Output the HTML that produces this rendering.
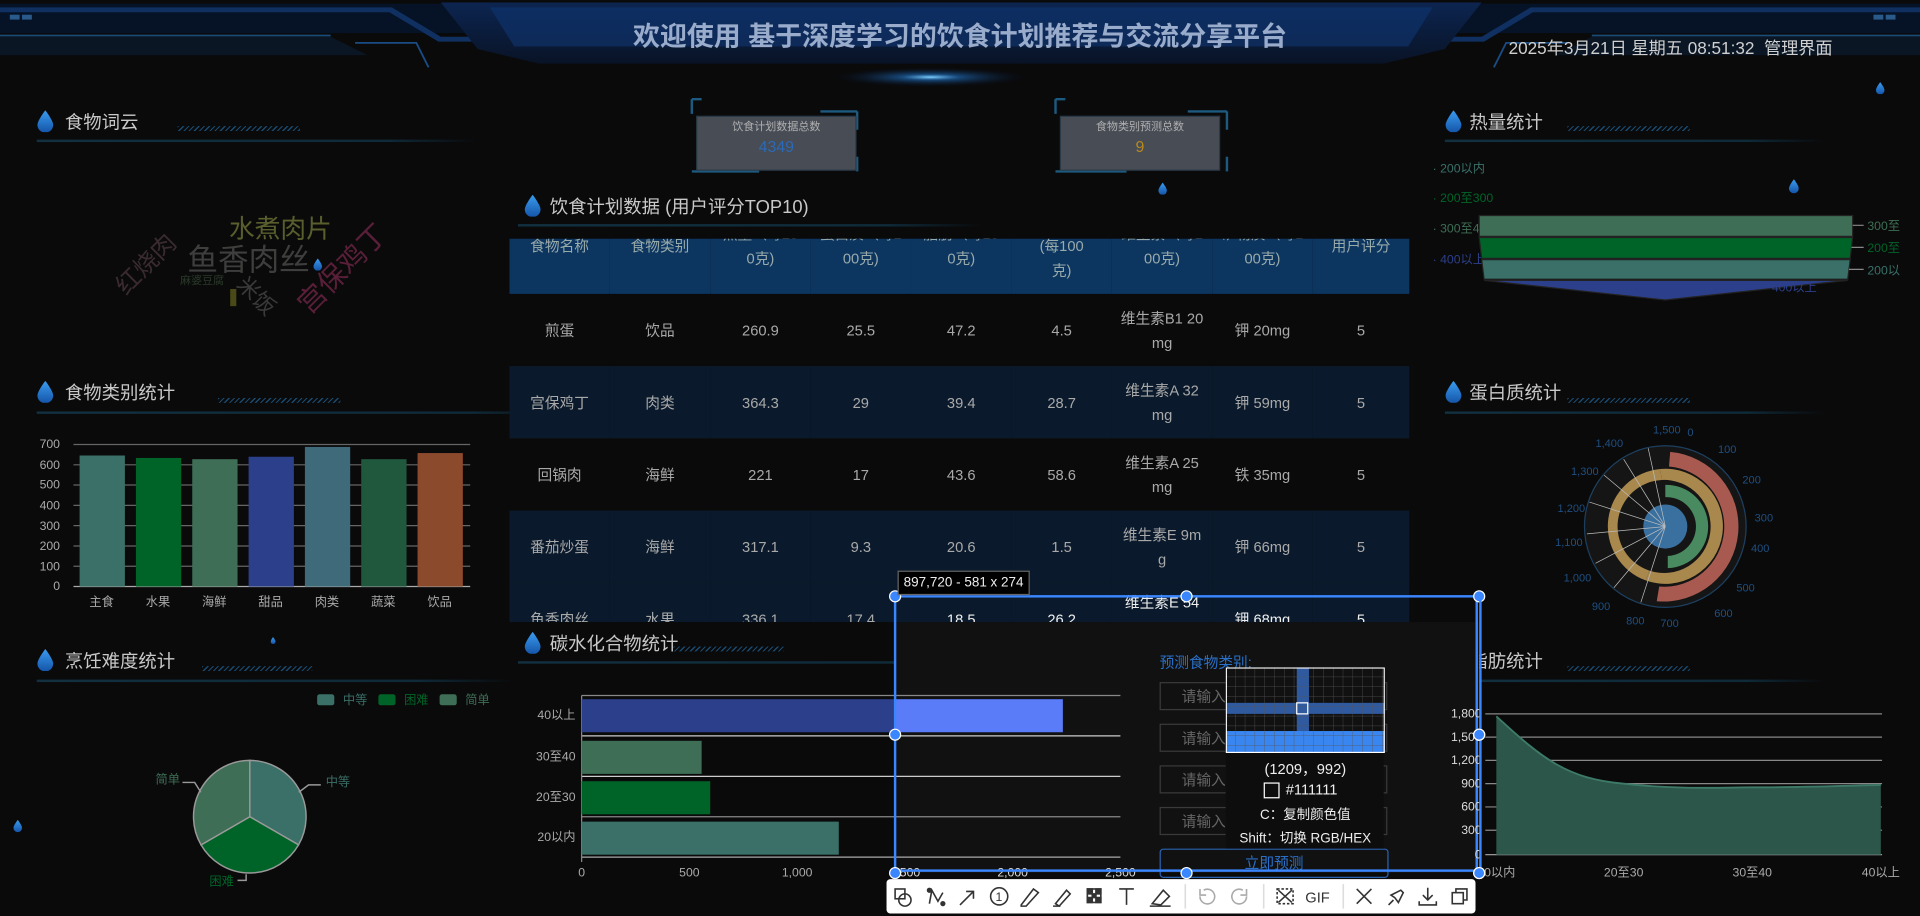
<!DOCTYPE html>
<html><head><meta charset="utf-8">
<style>
html,body{margin:0;padding:0;background:#0a0a0b;overflow:hidden;width:1920px;height:916px}
#s{position:absolute;left:0;top:0;width:1568px;height:748px;transform:scale(1.22449);transform-origin:0 0;font-family:"Liberation Sans","Noto Sans CJK SC",sans-serif;color:#bbb}
.a{position:absolute;white-space:nowrap}
.tt{position:absolute;font-size:15px;color:#c9c9c9}
.ul{position:absolute;height:2px;background:linear-gradient(90deg,#123040,#0f2a38 80%,transparent)}
.hat{position:absolute;height:4px;background:repeating-linear-gradient(135deg,#1d5a8a 0 1px,transparent 1px 3px);opacity:.8}
table{border-collapse:collapse;table-layout:fixed}
td{text-align:center;font-size:12px;color:#a9a9a9;line-height:20px;padding:0}
.inp{position:absolute;left:947px;width:186px;height:23px;border:1px solid #3a3a3a;font-size:12px;color:#666;line-height:23px;box-sizing:border-box;padding-left:17px}
.h{position:absolute;width:10px;height:10px;border-radius:50%;background:#3a86ff;border:1.5px solid #fff;box-sizing:border-box;margin:-5px 0 0 -5px}
</style></head><body><div id="s">
<svg width="0" height="0" style="position:absolute"><defs><linearGradient id="dg" x1="0" y1="0" x2="0" y2="1"><stop offset="0" stop-color="#3a9cf0"/><stop offset="1" stop-color="#1454a8"/></linearGradient>
<symbol id="drop" viewBox="0 0 10 14"><path d="M5 0C5 0 0 6.5 0 9.3A5 5 0 0 0 10 9.3C10 6.5 5 0 5 0Z" fill="url(#dg)"/></symbol></defs></svg>

<!-- header -->
<svg class="a" style="left:0;top:0" width="1568" height="75">
<defs><linearGradient id="hb" x1="0" y1="0" x2="0" y2="1"><stop offset="0" stop-color="#0c2550"/><stop offset="1" stop-color="#091326"/></linearGradient>
<radialGradient id="gl"><stop offset="0" stop-color="#7fd0ff"/><stop offset=".3" stop-color="#1f6fc0" stop-opacity=".6"/><stop offset="1" stop-color="#0a1630" stop-opacity="0"/></radialGradient></defs>
<rect x="0" y="3" width="1568" height="24" fill="#061226"/>
<path d="M0 6H320L360 30H1210L1250 6H1568V10H1252L1212 34H358L318 10H0Z" fill="#0f3060"/>
<path d="M360 2H1210L1180 40L1130 52H440L390 40Z" fill="url(#hb)"/>
<path d="M400 6H1170L1150 38H420Z" fill="#0f3572" opacity=".6"/>
<path d="M0 30H270L300 45H0Z" fill="#0a1e36" opacity=".6"/><path d="M1568 30H1300L1270 45H1568Z" fill="#0a1e36" opacity=".6"/>
<line x1="0" y1="29" x2="270" y2="29" stroke="#1a4c7a" stroke-width="1.5"/><line x1="1300" y1="29" x2="1568" y2="29" stroke="#1a4c7a" stroke-width="1.5"/>
<path d="M290 35L340 35L350 55" stroke="#1a4c84" fill="none" stroke-width="1.5"/><path d="M1280 35L1230 35L1220 55" stroke="#1a4c84" fill="none" stroke-width="1.5"/>
<ellipse cx="760" cy="63" rx="80" ry="8" fill="url(#gl)"/>
<rect x="8" y="12" width="8" height="4" fill="#2a5a8a"/><rect x="18" y="12" width="8" height="4" fill="#2a5a8a"/>
<rect x="1530" y="12" width="8" height="4" fill="#2a5a8a"/><rect x="1540" y="12" width="8" height="4" fill="#2a5a8a"/>
</svg>
<div class="a" style="left:0;width:1568px;top:12px;text-align:center;font-size:22px;font-weight:bold;color:#9aaccb">欢迎使用 基于深度学习的饮食计划推荐与交流分享平台</div>
<div class="a" style="left:1232px;top:29px;font-size:14px;color:#d0d0d0">2025年3月21日 星期五 08:51:32 &nbsp;管理界面</div>

<!-- scattered drops -->
<svg class="a" style="left:1532px;top:67px" width="7" height="10"><use href="#drop"/></svg>
<svg class="a" style="left:946px;top:149px" width="7" height="10"><use href="#drop"/></svg>
<svg class="a" style="left:1461px;top:146px" width="8" height="12"><use href="#drop"/></svg>
<svg class="a" style="left:256px;top:211px" width="7" height="10"><use href="#drop"/></svg>
<svg class="a" style="left:601px;top:207px" width="5" height="8"><use href="#drop"/></svg>
<svg class="a" style="left:929px;top:590px" width="8" height="12"><use href="#drop"/></svg>
<svg class="a" style="left:11px;top:669px" width="7" height="11"><use href="#drop"/></svg>
<svg class="a" style="left:221px;top:520px" width="4" height="6"><use href="#drop"/></svg>

<!-- section titles -->
<svg class="a" style="left:30px;top:90px" width="14" height="18"><use href="#drop"/></svg><div class="tt" style="left:53px;top:89px">食物词云</div><div class="hat" style="left:145px;top:103px;width:100px"></div><div class="ul" style="left:30px;top:114px;width:360px"></div>
<svg class="a" style="left:30px;top:311px" width="14" height="18"><use href="#drop"/></svg><div class="tt" style="left:53px;top:310px">食物类别统计</div><div class="hat" style="left:178px;top:325px;width:100px"></div><div class="ul" style="left:30px;top:336px;width:445px"></div>
<svg class="a" style="left:30px;top:530px" width="14" height="18"><use href="#drop"/></svg><div class="tt" style="left:53px;top:529px">烹饪难度统计</div><div class="hat" style="left:165px;top:544px;width:90px"></div><div class="ul" style="left:30px;top:555px;width:390px"></div>
<svg class="a" style="left:428px;top:159px" width="14" height="18"><use href="#drop"/></svg><div class="tt" style="left:449px;top:158px">饮食计划数据 (用户评分TOP10)</div><div class="ul" style="left:423px;top:183px;width:380px"></div>
<svg class="a" style="left:428px;top:516px" width="14" height="18"><use href="#drop"/></svg><div class="tt" style="left:449px;top:515px">碳水化合物统计</div><div class="hat" style="left:550px;top:528px;width:90px"></div><div class="ul" style="left:423px;top:540px;width:480px"></div>
<svg class="a" style="left:1180px;top:90px" width="14" height="18"><use href="#drop"/></svg><div class="tt" style="left:1200px;top:89px">热量统计</div><div class="hat" style="left:1280px;top:103px;width:100px"></div><div class="ul" style="left:1180px;top:114px;width:310px"></div>
<svg class="a" style="left:1180px;top:311px" width="14" height="18"><use href="#drop"/></svg><div class="tt" style="left:1200px;top:310px">蛋白质统计</div><div class="hat" style="left:1280px;top:325px;width:100px"></div><div class="ul" style="left:1180px;top:336px;width:310px"></div>
<svg class="a" style="left:1180px;top:530px" width="14" height="18"><use href="#drop"/></svg><div class="tt" style="left:1200px;top:529px">脂肪统计</div><div class="hat" style="left:1280px;top:544px;width:100px"></div><div class="ul" style="left:1180px;top:555px;width:310px"></div>

<!-- word cloud -->
<div class="a" style="left:187px;top:171px;font-size:21px;color:#5a5e2c">水煮肉片</div>
<div class="a" style="left:153px;top:193px;font-size:25px;color:#3e3f3c">鱼香肉丝</div>
<div class="a" style="left:88px;top:200px;font-size:20px;color:#3a2b2f;transform:rotate(-45deg)">红烧肉</div>
<div class="a" style="left:147px;top:222px;font-size:9px;color:#2a3a2a">麻婆豆腐</div>
<div class="a" style="left:192px;top:228px;font-size:18px;color:#3a3a3a;transform:rotate(45deg)">米饭</div>
<div class="a" style="left:232px;top:201px;font-size:23px;color:#5a1f38;transform:rotate(-45deg)">宫保鸡丁</div>
<div class="a" style="left:188px;top:236px;width:5px;height:14px;background:#4a4a18"></div>

<!-- bar chart -->
<svg class="a" style="left:0;top:350px" width="400" height="150" font-size="10" fill="#aaa">
<g stroke="#666" stroke-width="1">
<line x1="60" y1="13" x2="384" y2="13"/><line x1="60" y1="29.6" x2="384" y2="29.6"/><line x1="60" y1="46.1" x2="384" y2="46.1"/><line x1="60" y1="62.7" x2="384" y2="62.7"/><line x1="60" y1="79.3" x2="384" y2="79.3"/><line x1="60" y1="95.9" x2="384" y2="95.9"/><line x1="60" y1="112.4" x2="384" y2="112.4"/>
<line x1="60" y1="129" x2="384" y2="129" stroke="#aaa"/></g>
<g text-anchor="end"><text x="49" y="16">700</text><text x="49" y="33">600</text><text x="49" y="49">500</text><text x="49" y="66">400</text><text x="49" y="83">300</text><text x="49" y="99">200</text><text x="49" y="116">100</text><text x="49" y="132">0</text></g>
<rect x="65" y="22" width="37" height="107" fill="#3a7068"/>
<rect x="111" y="24" width="37" height="105" fill="#006428"/>
<rect x="157" y="25" width="37" height="104" fill="#3e6e55"/>
<rect x="203" y="23" width="37" height="106" fill="#2c3f8a"/>
<rect x="249" y="15" width="37" height="114" fill="#3e6a7a"/>
<rect x="295" y="25" width="37" height="104" fill="#20583e"/>
<rect x="341" y="20" width="37" height="109" fill="#8c4a2c"/>
<g text-anchor="middle"><text x="83" y="145">主食</text><text x="129" y="145">水果</text><text x="175" y="145">海鲜</text><text x="221" y="145">甜品</text><text x="267" y="145">肉类</text><text x="313" y="145">蔬菜</text><text x="359" y="145">饮品</text></g>
</svg>

<!-- pie -->
<svg class="a" style="left:100px;top:560px" width="320" height="180" font-size="10">
<rect x="159" y="7" width="14" height="9" rx="2" fill="#3a7068"/><text x="180" y="15" fill="#3a7068">中等</text>
<rect x="209" y="7" width="14" height="9" rx="2" fill="#006428"/><text x="230" y="15" fill="#006428">困难</text>
<rect x="259" y="7" width="14" height="9" rx="2" fill="#3e6e55"/><text x="280" y="15" fill="#3e6e55">简单</text>
<g transform="translate(104,107)" stroke="#999" stroke-width="1.2">
<path d="M0 0V-46A46 46 0 0 1 39.8 23Z" fill="#3a7068"/>
<path d="M0 0L39.8 23A46 46 0 0 1 -39.8 23Z" fill="#006428"/>
<path d="M0 0L-39.8 23A46 46 0 0 1 0 -46Z" fill="#3e6e55"/>
<path d="M40 -20L48 -26H58M-40 -20L-45 -28H-55M-3 47V52H-10" fill="none"/></g>
<text x="166" y="82" fill="#3a7068">中等</text><text x="27" y="80" fill="#3e6e55">简单</text><text x="71" y="163" fill="#006428">困难</text>
</svg>

<!-- stat boxes -->
<svg class="a" style="left:560px;top:78px" width="460" height="65">
<g fill="none" stroke="#1d5a80" stroke-width="2"><path d="M5 3V15M5 3H13M5 62H60M140 62V50M140 13V28M110 13H140"/><path d="M302 3V15M302 3H310M302 62H360M442 62V50M442 13V28M410 13H442"/></g>
<rect x="9" y="17" width="130" height="44" fill="#474c55" stroke="#2a3a48"/>
<rect x="306" y="17" width="130" height="44" fill="#474c55" stroke="#2a3a48"/>
</svg>
<div class="a" style="left:569px;top:96px;width:130px;text-align:center;font-size:9px;color:#b0b0b0">饮食计划数据总数</div>
<div class="a" style="left:569px;top:112px;width:130px;text-align:center;font-size:13px;color:#2a6ab8">4349</div>
<div class="a" style="left:866px;top:96px;width:130px;text-align:center;font-size:9px;color:#b0b0b0">食物类别预测总数</div>
<div class="a" style="left:866px;top:112px;width:130px;text-align:center;font-size:13px;color:#b88a1a">9</div>

<!-- table -->
<div class="a" style="left:416px;top:195px;width:735px;height:313px;overflow:hidden">
<table style="width:735px;margin-top:-34px">
<colgroup><col style="width:82px"><col style="width:82px"><col style="width:82px"><col style="width:82px"><col style="width:82px"><col style="width:82px"><col style="width:82px"><col style="width:82px"><col style="width:79px"></colgroup>
<tr style="background:#0c3560;height:79px"><td style="color:#9aa">食物名称</td><td style="color:#9aa">食物类别</td><td style="color:#9aa">热量（每10<br>0克)</td><td style="color:#9aa">蛋白质（每1<br>00克)</td><td style="color:#9aa">脂肪（每10<br>0克)</td><td style="color:#9aa">碳水化合物<br>(每100<br>克)</td><td style="color:#9aa">维生素（每1<br>00克)</td><td style="color:#9aa">矿物质（每1<br>00克)</td><td style="color:#9aa">用户评分</td></tr>
<tr style="height:59px"><td>煎蛋</td><td>饮品</td><td>260.9</td><td>25.5</td><td>47.2</td><td>4.5</td><td>维生素B1 20<br>mg</td><td>钾 20mg</td><td>5</td></tr>
<tr style="height:59px;background:#0a1a2c"><td>宫保鸡丁</td><td>肉类</td><td>364.3</td><td>29</td><td>39.4</td><td>28.7</td><td>维生素A 32<br>mg</td><td>钾 59mg</td><td>5</td></tr>
<tr style="height:59px"><td>回锅肉</td><td>海鲜</td><td>221</td><td>17</td><td>43.6</td><td>58.6</td><td>维生素A 25<br>mg</td><td>铁 35mg</td><td>5</td></tr>
<tr style="height:59px;background:#0a1a2c"><td>番茄炒蛋</td><td>海鲜</td><td>317.1</td><td>9.3</td><td>20.6</td><td>1.5</td><td>维生素E 9m<br>g</td><td>钾 66mg</td><td>5</td></tr>
<tr style="height:59px;background:#0a1a2c"><td>鱼香肉丝</td><td>水果</td><td>336.1</td><td>17.4</td><td style="color:#eee">18.5</td><td style="color:#eee">26.2</td><td style="color:#eee;vertical-align:top;padding-top:6px">维生素E 54<br>mg</td><td style="color:#eee">钾 68mg</td><td style="color:#eee">5</td></tr>
</table></div>

<!-- selection brightened bg -->
<div class="a" style="left:731px;top:508px;width:477px;height:205px;background:#111"></div>

<!-- carb chart -->
<svg class="a" style="left:420px;top:560px" width="510" height="160" font-size="10" fill="#aaa">
<g stroke="#888"><line x1="55" y1="8" x2="495" y2="8"/><line x1="55" y1="41" x2="495" y2="41" stroke="#ccc"/><line x1="55" y1="74" x2="495" y2="74" stroke="#ccc"/><line x1="55" y1="107" x2="495" y2="107"/><line x1="55" y1="140" x2="495" y2="140" stroke="#aaa"/><line x1="55" y1="8" x2="55" y2="144"/></g>
<rect x="55" y="11" width="256" height="27" fill="#2c3f8a"/><rect x="311" y="11" width="137" height="27" fill="#5a7cf8"/>
<rect x="55" y="45" width="98" height="27" fill="#3e6e55"/>
<rect x="55" y="78" width="105" height="27" fill="#006428"/>
<rect x="55" y="111" width="210" height="27" fill="#3a7068"/>
<g text-anchor="end"><text x="50" y="27">40以上</text><text x="50" y="61">30至40</text><text x="50" y="94">20至30</text><text x="50" y="127">20以内</text></g>
<g text-anchor="middle"><text x="55" y="156">0</text><text x="143" y="156">500</text><text x="231" y="156">1,000</text><text x="319" y="156" fill="#ddd">1,500</text><text x="407" y="156" fill="#ddd">2,000</text><text x="495" y="156" fill="#ddd">2,500</text></g>
</svg>

<!-- predict form -->
<div class="a" style="left:947px;top:532px;font-size:12px;color:#2a70c8">预测食物类别:</div>
<div class="inp" style="top:557px">请输入热量（每100克)</div>
<div class="inp" style="top:591px">请输入蛋白质（每100克)</div>
<div class="inp" style="top:625px">请输入脂肪（每100克)</div>
<div class="inp" style="top:659px">请输入碳水化合物（每100克)</div>
<div class="a" style="left:947px;top:693px;width:187px;height:24px;border:1px solid #2a62b0;border-radius:3px;box-sizing:border-box;text-align:center;font-size:12px;line-height:22px;color:#2a70c8">立即预测</div>

<!-- magnifier -->
<div class="a" style="left:1001px;top:545px;width:129px;height:148px;background:#0d0d0d"></div>
<svg class="a" style="left:1001px;top:545px" width="130" height="70">
<defs><pattern id="gp" width="8" height="8" patternUnits="userSpaceOnUse"><path d="M8 0V8H0" fill="none" stroke="#555" stroke-width=".6"/></pattern></defs>
<rect width="130" height="70" fill="#111"/><rect x="58" width="10" height="52" fill="#2f5aa0"/><rect y="29" width="130" height="9" fill="#2f5aa0"/>
<rect y="52" width="130" height="18" fill="#3a86f0"/><rect width="130" height="70" fill="url(#gp)"/>
<rect x="58" y="29" width="9" height="9" fill="none" stroke="#fff"/><rect x=".5" y=".5" width="129" height="69" fill="none" stroke="#fff"/></svg>
<div class="a" style="left:1001px;top:619px;width:130px;text-align:center;font-size:12px;color:#eee">(1209，992)</div>
<div class="a" style="left:1032px;top:639px;width:11px;height:11px;border:1px solid #fff"></div>
<div class="a" style="left:1050px;top:638px;font-size:12px;color:#eee">#111111</div>
<div class="a" style="left:1001px;top:657px;width:130px;text-align:center;font-size:11px;color:#eee">C：复制颜色值</div>
<div class="a" style="left:1001px;top:676px;width:130px;text-align:center;font-size:11px;color:#eee">Shift：切换 RGB/HEX</div>

<!-- selection frame -->
<div class="a" style="left:731px;top:487px;width:477px;height:226px;border:2px solid #3a86ff;box-sizing:border-box;margin:-1px 0 0 -1px"></div>
<div class="h" style="left:731px;top:487px"></div><div class="h" style="left:969px;top:487px"></div><div class="h" style="left:1208px;top:487px"></div>
<div class="h" style="left:731px;top:600px"></div><div class="h" style="left:1208px;top:600px"></div>
<div class="h" style="left:731px;top:713px"></div><div class="h" style="left:969px;top:713px"></div><div class="h" style="left:1208px;top:713px"></div>
<div class="a" style="left:733px;top:466px;height:18px;padding:0 4px;background:#000;border:1px solid #666;font-size:11px;line-height:18px;color:#eee">897,720 - 581 x 274</div>

<!-- toolbar -->
<div class="a" style="left:724px;top:718px;width:481px;height:28px;background:#fff;border-radius:3px"></div>
<svg class="a" style="left:724px;top:718px" width="481" height="28" fill="none" stroke="#333" stroke-width="1.3" font-size="12">
<rect x="7" y="8" width="8" height="8"/><circle cx="15" cy="17" r="5"/>
<path d="M35 20L37 9L42 18L46 11" /><circle cx="35" cy="9" r="1.5" fill="#333"/><circle cx="46" cy="20" r="1.5" fill="#333"/>
<path d="M60 21L71 10M65 10H71V16"/>
<circle cx="92" cy="14" r="7"/><text x="89" y="18" fill="#333" stroke="none" font-size="10">1</text>
<path d="M110 21L120 8L124 11L114 22L110 22Z"/>
<path d="M136 22H142M138 20L147 9L150 12L141 22Z"/>
<rect x="164" y="8" width="11" height="11"/><rect x="164" y="8" width="4" height="4" fill="#333"/><rect x="171" y="8" width="4" height="4" fill="#333"/><rect x="168" y="12" width="3" height="3" fill="#333"/><rect x="164" y="15" width="4" height="4" fill="#333"/><rect x="171" y="15" width="4" height="4" fill="#333"/>
<path d="M190 8H202M196 8V21"/>
<path d="M217 20L226 9L231 14L224 21ZM215 22H232"/>
<line x1="244" y1="4" x2="244" y2="24" stroke="#ddd"/>
<path d="M259 9A6 6 0 1 1 256 14M256 8V13H261" stroke="#aaa"/>
<path d="M291 9A6 6 0 1 0 294 14M294 8V13H289" stroke="#aaa"/>
<line x1="308" y1="4" x2="308" y2="24" stroke="#ddd"/>
<rect x="319" y="8" width="13" height="12" stroke-dasharray="2 1.5"/><path d="M320 9L331 19M331 9L320 19"/>
<text x="342" y="19" fill="#333" stroke="none">GIF</text>
<line x1="373" y1="4" x2="373" y2="24" stroke="#ddd"/>
<path d="M384 8L396 20M396 8L384 20"/>
<path d="M410 21L414 17M412 13L420 9L422 11L418 19L415 15Z"/>
<path d="M442 7V17M438 13L442 17L446 13M435 18V21H449V18"/>
<rect x="462" y="11" width="9" height="9"/><path d="M465 11V8H474V17H471"/>
</svg>

<!-- heat funnel -->
<svg class="a" style="left:1160px;top:125px" width="408" height="130" font-size="10">
<text x="10" y="16" fill="#3a7068">· 200以内</text><text x="10" y="40" fill="#006428">· 200至300</text><text x="10" y="65" fill="#3e6e55">· 300至400</text><text x="10" y="90" fill="#2c3f8a">· 400以上</text>
<path d="M48 51H353V68H48Z" fill="#3e6e55" stroke="#222"/>
<path d="M48 69H353L351 86H50Z" fill="#006428" stroke="#222"/>
<path d="M50 87H351L349 103H52Z" fill="#3a7068" stroke="#222"/>
<path d="M52 104H349L200 120Z" fill="#2c3f8a" stroke="#222"/>
<path d="M353 59H362M352 77H362M350 95H362" stroke="#888"/>
<text x="365" y="63" fill="#3e6e55">300至</text><text x="365" y="81" fill="#006428">200至</text><text x="365" y="99" fill="#3a7068">200以</text><text x="287" y="113" fill="#2c3f8a">400以上</text>
</svg>

<!-- polar -->
<svg class="a" style="left:1260px;top:338px" width="200" height="180" font-size="9" fill="#1f4f80">
<g transform="translate(100,92)">
<circle r="66" fill="#151515" stroke="#1d4060"/>
<path d="M4 -61A61 61 0 0 1 -7 61L-5 49A49 49 0 0 0 3 -49Z" fill="#a85a50"/>
<path d="M-4 -47A47 47 0 1 1 -16 44L-13 36A38 38 0 1 0 -3 -38Z" fill="#a8884c"/>
<path d="M-4 -47A47 47 0 0 0 -16 44L-13 36A38 38 0 0 1 -3 -38Z" fill="#a8884c"/>
<path d="M0 -34A34 34 0 0 1 2 34L2 24A24 24 0 0 0 0 -24Z" fill="#4a8a60"/>
<circle r="18" fill="#3a70a0"/>
<g stroke="#bbb" stroke-width=".6"><path d="M0 0L-14 -64M0 0L-34 -55M0 0L-50 -42M0 0L-62 -20M0 0L-64 6M0 0L-57 30M0 0L-42 50M0 0L-20 62"/></g>
</g>
<text x="90" y="16">1,500</text><text x="118" y="18">0</text><text x="43" y="27">1,400</text><text x="143" y="32">100</text><text x="23" y="50">1,300</text><text x="163" y="57">200</text><text x="12" y="80">1,200</text><text x="173" y="88">300</text><text x="10" y="108">1,100</text><text x="170" y="113">400</text><text x="17" y="137">1,000</text><text x="158" y="145">500</text><text x="40" y="160">900</text><text x="140" y="166">600</text><text x="68" y="172">800</text><text x="96" y="174">700</text>
</svg>

<!-- fat chart -->
<svg class="a" style="left:1170px;top:570px" width="398" height="150" font-size="10" fill="#ddd">
<g stroke="#888"><line x1="43" y1="13" x2="367" y2="13"/><line x1="43" y1="32" x2="367" y2="32"/><line x1="43" y1="51" x2="367" y2="51"/><line x1="43" y1="70" x2="367" y2="70"/><line x1="43" y1="89" x2="367" y2="89"/><line x1="43" y1="108" x2="367" y2="108"/><line x1="43" y1="128" x2="367" y2="128" stroke="#aaa"/></g>
<path d="M52 15C90 50 110 66 156 70C200 75 240 73 261 73C300 73 330 72 366 71V128H52Z" fill="#2c564a"/>
<path d="M52 15C90 50 110 66 156 70C200 75 240 73 261 73C300 73 330 72 366 71" stroke="#3e7a68" fill="none" stroke-width="1.5"/>
<g text-anchor="end"><text x="40" y="16">1,800</text><text x="40" y="35">1,500</text><text x="40" y="54">1,200</text><text x="40" y="73">900</text><text x="40" y="92">600</text><text x="40" y="111">300</text><text x="40" y="131">0</text></g>
<g text-anchor="middle" fill="#aaa"><text x="52" y="146">20以内</text><text x="156" y="146">20至30</text><text x="261" y="146">30至40</text><text x="366" y="146">40以上</text></g>
</svg>
<div class="a" style="left:1208px;top:487px;width:2px;height:226px;background:#3a86ff"></div>
<div class="h" style="left:1208px;top:600px"></div><div class="h" style="left:1208px;top:713px"></div>
</div></body></html>
